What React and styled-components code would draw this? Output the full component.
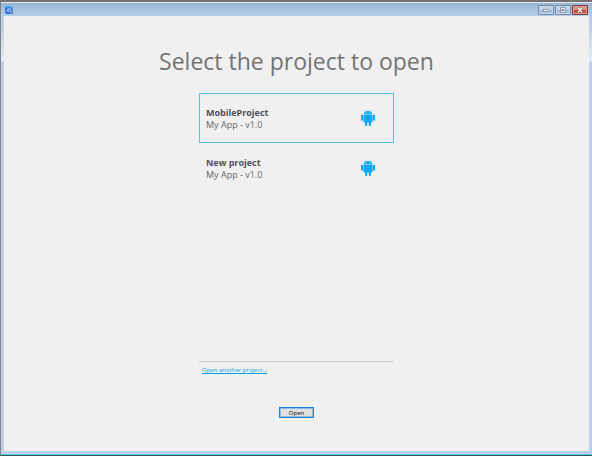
import React, { useState } from "react";
import styled, { createGlobalStyle } from "styled-components";

const GlobalStyle = createGlobalStyle`
  * { box-sizing: border-box; }
  body { margin: 0; background: #777; }
`;

const Window = styled.div`
  min-height: 100vh;
  display: flex;
  flex-direction: column;
  font-family: "Open Sans", "Noto Sans", sans-serif;
  border-top: 2px solid #747070;
  border-left: 1px solid #858585;
  border-bottom: 1px solid #35504f;
`;

const Frame = styled.div`
  flex: 1;
  display: flex;
  flex-direction: column;
  padding: 0 3px 3px;
  border-top: 1px solid #e4ebf3;
  border-bottom: 1px solid #4fd5f5;
  background: linear-gradient(#9ab5d3 0, #b5cfea 13px, #b7d0ea 23px, #e3ecf7 58px, #b9d1ea 59px);
`;

const TitleBar = styled.header`
  height: 13px;
  display: flex;
  align-items: flex-start;
  justify-content: space-between;
  padding: 2px 1px 0;
`;

const Controls = styled.div`
  display: flex;
  gap: 1px;
`;

const ControlButton = styled.button`
  width: 16px;
  height: 10px;
  padding: 0;
  display: flex;
  align-items: center;
  justify-content: center;
  border: 1px solid ${(p) => (p.$danger ? "#7c3840" : "#7089a6")};
  border-radius: 1px;
  box-shadow: inset 0 0 0 1px ${(p) => (p.$danger ? "#e09a8c" : "#c6d8ea")};
  background: ${(p) =>
    p.$danger
      ? "linear-gradient(#dd9586 0 45%, #bd3d25 50%, #d46b4c)"
      : "linear-gradient(#bfd2e7 0 45%, #9bb5d1 50%, #b3cce6)"};
`;

const Content = styled.main`
  flex: 1;
  display: flex;
  flex-direction: column;
  align-items: center;
  padding: 28px 16px 33px;
  background: #f0f0f0;
`;

const Heading = styled.h1`
  margin: 0 0 15px;
  font-size: 23px;
  line-height: 34px;
  font-weight: 400;
  color: #747474;
  text-align: center;
`;

const Picker = styled.section`
  flex: 1;
  width: 33%;
  min-width: 195px;
  display: flex;
  flex-direction: column;
`;

const ProjectList = styled.div`
  flex: 1;
  display: flex;
  flex-direction: column;
  border-bottom: 1px solid #cacaca;
`;

const ProjectRow = styled.button`
  height: 50px;
  display: flex;
  align-items: center;
  justify-content: space-between;
  padding: 0 18px 0 6px;
  border: 1px solid ${(p) => (p.$selected ? "#5bbde9" : "transparent")};
  background: none;
  font-family: inherit;
  text-align: left;
`;

const ProjectText = styled.span`
  display: flex;
  flex-direction: column;
  padding-top: 2px;
  font-size: 9px;
  line-height: 12px;
  color: #666;
`;

const ProjectName = styled.strong`
  font-weight: 700;
  color: #505050;
`;

const OtherLink = styled.a`
  align-self: flex-start;
  margin: 4px 3px 0;
  font-size: 6px;
  line-height: 8px;
  color: #009fe3;
`;

const OpenButton = styled.button`
  width: 35px;
  height: 11px;
  margin-top: 33px;
  padding: 0;
  border: 1px solid #1c83d8;
  box-shadow: inset 0 0 0 1px #8dbbe4;
  background: #e1e1e1;
  font-family: inherit;
  font-size: 6px;
  line-height: 8px;
  color: #000;
`;

function AppIcon() {
  return (
    <svg width="9" height="10" viewBox="0 0 9 10" aria-hidden="true">
      <rect x="0" y="1" width="7.5" height="8" rx="2.5" fill="#2b6fe0" />
      <path d="M1 2.6Q3.6 .2 6.4 2.6" fill="none" stroke="#48bfff" strokeWidth="1.2" />
      <path d="M3.5 3.4L1.5 6H4M4 3.2V7M5.5 3.5V6" fill="none" stroke="#dcecff" strokeWidth=".8" />
      <circle cx="5.8" cy="6.9" r="1.4" fill="#b9d4f4" stroke="#3158c9" strokeWidth=".8" />
      <path d="M6.8 7.9L8.4 9.3" stroke="#5d65bf" />
    </svg>
  );
}

function AndroidIcon() {
  return (
    <svg width="14" height="16" viewBox="0 0 14 16" fill="#0da8f8" aria-hidden="true">
      <path d="M3.8.3L5 1.8M10.2.3L9 1.8" stroke="#0da8f8" strokeWidth=".6" />
      <path d="M2.5 4.5C2.5 2.2 4.5.9 7 .9S11.5 2.2 11.5 4.5Z" />
      <path d="M2.5 5H11.5V11.5Q11.5 12.5 10.5 12.5H3.5Q2.5 12.5 2.5 11.5Z" />
      <rect x="0" y="4.8" width="2.1" height="6" rx="1" />
      <rect x="11.9" y="4.8" width="2.1" height="6" rx="1" />
      <rect x="4" y="11" width="2.2" height="5" rx="1" />
      <rect x="7.8" y="11" width="2.2" height="5" rx="1" />
      <circle cx="5" cy="2.9" r=".5" fill="#f0f0f0" />
      <circle cx="9" cy="2.9" r=".5" fill="#f0f0f0" />
    </svg>
  );
}

const MinimizeIcon = () => (
  <svg width="8" height="6" viewBox="0 0 8 6" aria-hidden="true">
    <rect x="1.5" y="2.5" width="5" height="2" fill="#fff" stroke="#65758a" strokeWidth=".6" />
  </svg>
);

const MaximizeIcon = () => (
  <svg width="8" height="6" viewBox="0 0 8 6" aria-hidden="true">
    <rect x="1.5" y=".8" width="5" height="4.4" fill="#fff" stroke="#59687d" strokeWidth=".6" />
    <rect x="3" y="2.2" width="2" height="1.6" fill="#8194ab" stroke="#59687d" strokeWidth=".5" />
  </svg>
);

const CloseIcon = () => (
  <svg width="8" height="6" viewBox="0 0 8 6" aria-hidden="true">
    <path d="M2 .8L6 5.2M6 .8L2 5.2" stroke="#624a53" strokeWidth="2.4" />
    <path d="M2 .8L6 5.2M6 .8L2 5.2" stroke="#fff" strokeWidth="1.4" />
  </svg>
);

const projects = [
  { name: "MobileProject", detail: "My App - v1.0" },
  { name: "New project", detail: "My App - v1.0" },
];

export default function App() {
  const [selected, setSelected] = useState(0);
  return (
    <Window>
      <GlobalStyle />
      <Frame>
        <TitleBar>
          <AppIcon />
          <Controls>
            <ControlButton aria-label="Minimize"><MinimizeIcon /></ControlButton>
            <ControlButton aria-label="Maximize"><MaximizeIcon /></ControlButton>
            <ControlButton aria-label="Close" $danger><CloseIcon /></ControlButton>
          </Controls>
        </TitleBar>
        <Content>
          <Heading>Select the project to open</Heading>
          <Picker>
            <ProjectList>
              {projects.map((project, index) => (
                <ProjectRow
                  key={project.name}
                  $selected={index === selected}
                  aria-pressed={index === selected}
                  onClick={() => setSelected(index)}
                >
                  <ProjectText>
                    <ProjectName>{project.name}</ProjectName>
                    <span>{project.detail}</span>
                  </ProjectText>
                  <AndroidIcon />
                </ProjectRow>
              ))}
            </ProjectList>
            <OtherLink href="#open">Open another project...</OtherLink>
          </Picker>
          <OpenButton>Open</OpenButton>
        </Content>
      </Frame>
    </Window>
  );
}
